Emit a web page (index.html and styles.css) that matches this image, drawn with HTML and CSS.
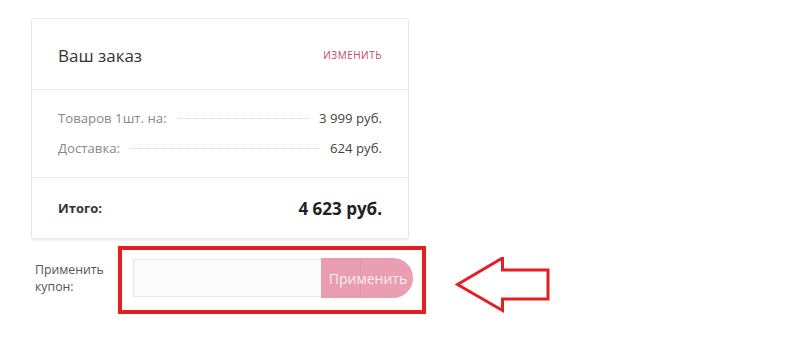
FILE: index.html
```html
<!DOCTYPE html>
<html lang="ru">
<head>
<meta charset="utf-8">
<link rel="stylesheet" href="styles.css">
</head>
<body>
<div class="page">
  <div class="card">
    <div class="card-head">
      <div class="title">Ваш заказ</div>
      <a class="edit">изменить</a>
    </div>
    <div class="card-rows">
      <div class="row"><span class="label">Товаров 1шт. на:</span><span class="dots"></span><span class="value">3 999 руб.</span></div>
      <div class="row"><span class="label">Доставка:</span><span class="dots"></span><span class="value">624 руб.</span></div>
    </div>
    <div class="card-total">
      <span class="total-label">Итого:</span>
      <span class="total-value">4 623 руб.</span>
    </div>
  </div>
  <div class="coupon">
    <div class="coupon-label">Применить<br>купон:</div>
    <div class="coupon-field">
      <div class="coupon-input"></div>
      <button class="coupon-btn">Применить</button>
    </div>
  </div>
  <div class="highlight"></div>
  <svg class="arrow" width="100" height="60" viewBox="0 0 100 60">
    <polygon points="2.5,27.5 47.5,1 47.5,13 93,13 93,42 47.5,42 47.5,53.5" fill="#fff" stroke="#e31e24" stroke-width="3" stroke-linejoin="miter"/>
  </svg>
</div>
</body>
</html>
```
FILE: styles.css
```css
* { box-sizing: border-box; }
html, body { margin: 0; padding: 0; background: #fff; }
body { font-family: "Open Sans", "Noto Sans", sans-serif; color: #333; }
.page { position: relative; width: 800px; height: 349px; padding: 18px 0 0 31px; }
.card {
  width: 378px;
  border: 1px solid #e8e8e8;
  border-radius: 3px;
  box-shadow: 0 2px 2px rgba(0,0,0,0.06);
  background: #fff;
}
.card-head {
  height: 71px;
  display: flex;
  align-items: center;
  justify-content: space-between;
  padding: 0 26px 0 26px;
  border-bottom: 1px solid #ebebeb;
}
.title { font-size: 17px; color: #333; padding-top: 2px; }
.edit {
  font-size: 10px;
  text-transform: uppercase;
  letter-spacing: 0.5px;
  color: #c4465f;
  padding-top: 2px;
}
.card-rows { padding: 13px 26px 14px 26px; border-bottom: 1px solid #ebebeb; }
.row { display: flex; align-items: center; height: 30px; font-size: 13.2px; }
.label { color: #888; }
.dots { flex: 1; border-bottom: 1px dotted #d6d6d6; margin: 0 10px; height: 1px; }
.value { color: #444; }
.card-total {
  height: 60px;
  display: flex;
  align-items: center;
  justify-content: space-between;
  padding: 0 26px;
}
.total-label { font-size: 13px; font-weight: 700; color: #333; }
.total-value { font-size: 17px; font-weight: 700; color: #222; }
.coupon { display: flex; align-items: center; margin-top: 20px; padding-left: 4px; }
.coupon-label { font-size: 12.3px; line-height: 17px; color: #555; width: 98px; }
.coupon-field { display: flex; align-items: stretch; position: relative; }
.coupon-input {
  width: 228px;
  height: 38px;
  border: 1px solid #e6e6e6;
  background: #fbfbfb;
}
.coupon-btn {
  position: absolute;
  left: 188px;
  top: -1px;
  width: 92px;
  height: 40px;
  border: 0;
  border-radius: 0 20px 20px 0;
  background: rgba(225, 120, 148, 0.72);
  color: rgba(255,255,255,0.85);
  font-family: "Open Sans", "Noto Sans", sans-serif;
  font-size: 14px;
  padding: 0 0 0 2px;
}
.highlight {
  position: absolute;
  left: 118px;
  top: 246px;
  width: 308px;
  height: 68px;
  border: 4px solid #e31e24;
}
.arrow { position: absolute; left: 455px; top: 257px; }
```
